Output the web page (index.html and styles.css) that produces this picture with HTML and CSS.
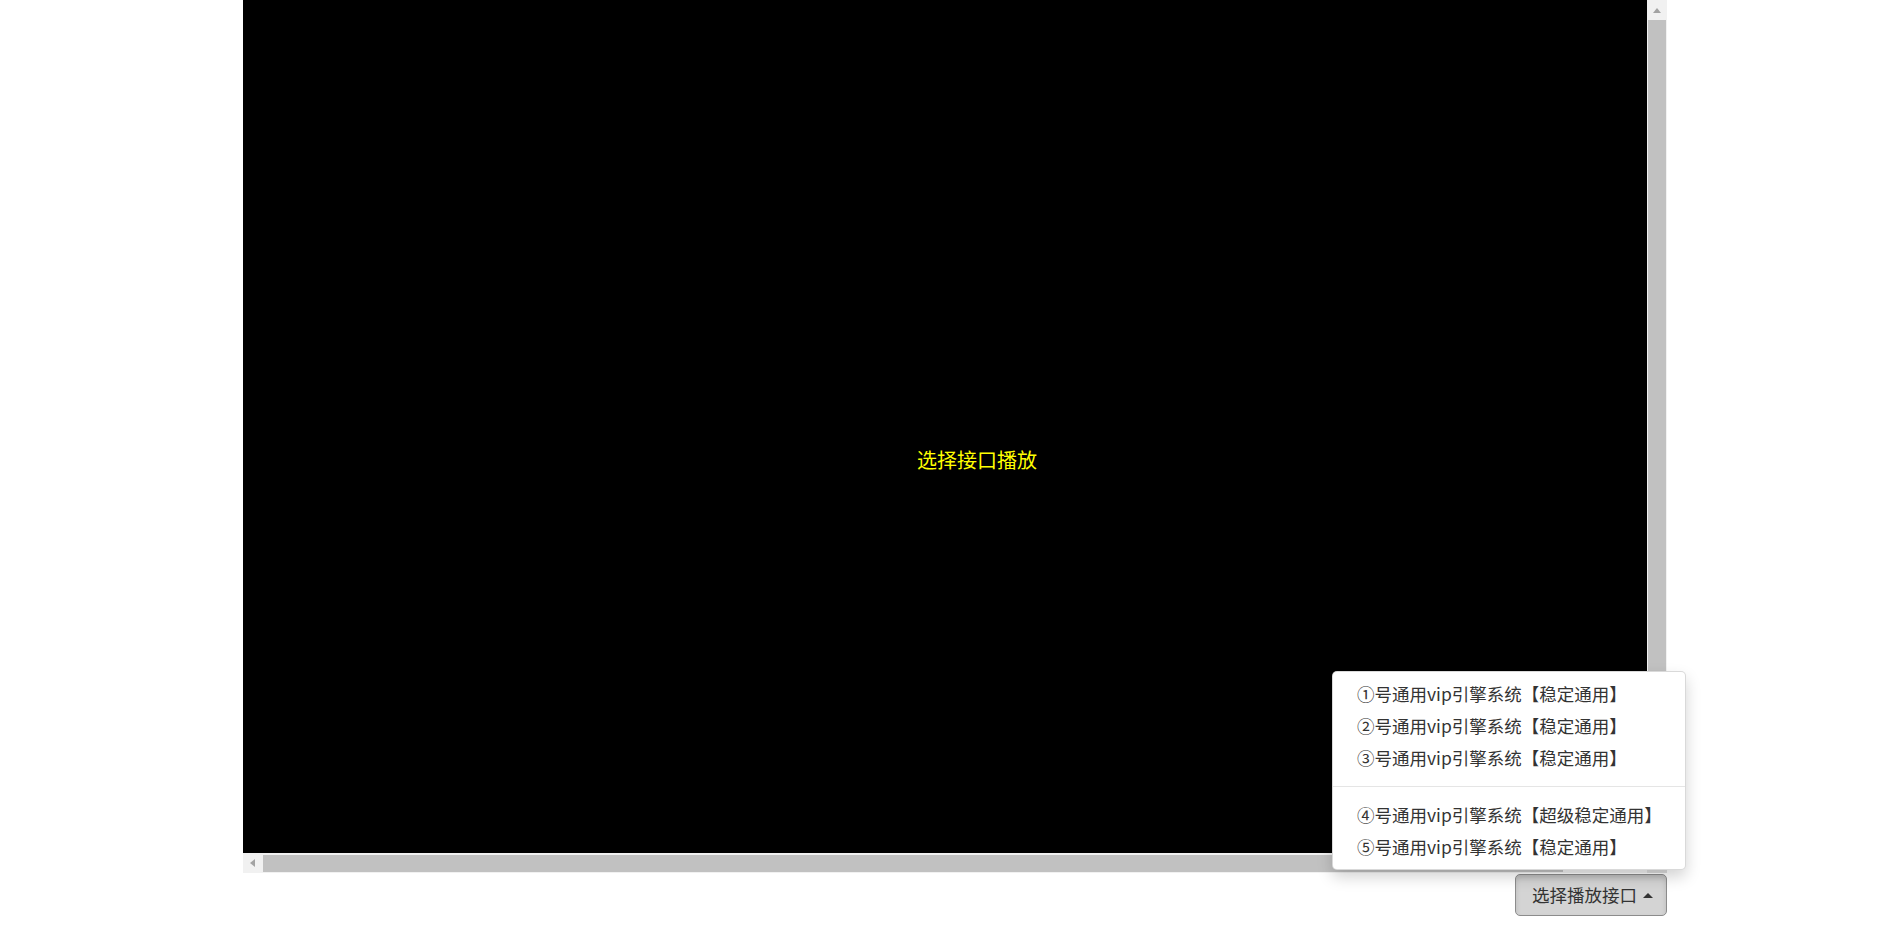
FILE: index.html
```html
<!DOCTYPE html>
<html lang="zh-CN">
<head>
<meta charset="utf-8">
<title>选择播放接口</title>
<link rel="stylesheet" href="styles.css">
</head>
<body>
<div class="page">
  <div class="player">
    <div class="viewport">
      <div class="screen"><span class="hint">选择接口播放</span></div>
    </div>
    <div class="vscroll">
      <div class="sb-btn"><span class="arrow-up"></span></div>
      <div class="vthumb"></div>
    </div>
    <div class="hscroll">
      <div class="sb-btn"><span class="arrow-left"></span></div>
      <div class="hthumb"></div>
    </div>
    <div class="corner"></div>
  </div>
  <div class="controls">
    <div class="btn-group">
      <button class="btn" type="button">选择播放接口<span class="caret"></span></button>
      <ul class="menu">
        <li><a href="#">①号通用vip引擎系统【稳定通用】</a></li>
        <li><a href="#">②号通用vip引擎系统【稳定通用】</a></li>
        <li><a href="#">③号通用vip引擎系统【稳定通用】</a></li>
        <li class="divider"></li>
        <li><a href="#">④号通用vip引擎系统【超级稳定通用】</a></li>
        <li><a href="#">⑤号通用vip引擎系统【稳定通用】</a></li>
      </ul>
    </div>
  </div>
</div>
</body>
</html>
```
FILE: styles.css
```css
* { box-sizing: border-box; }
html, body { margin: 0; padding: 0; background: #fff; }
body {
  font-family: "Noto Sans CJK SC", "Noto Sans", "Liberation Sans", sans-serif;
  color: #333;
}
.page {
  width: 1424px;
  margin-left: 243px;
}
.player {
  display: grid;
  grid-template-columns: 1404px 20px;
  grid-template-rows: 853px 20px;
}
.viewport {
  overflow: hidden;
  background: #000;
}
.screen {
  width: 1468px;
  height: 920px;
  display: flex;
  align-items: center;
  justify-content: center;
  background: #000;
}
.hint {
  color: #ffff00;
  font-size: 20px;
  line-height: 24px;
}
.vscroll {
  background: #f1f1f1;
  display: flex;
  flex-direction: column;
  align-items: center;
}
.vscroll .sb-btn {
  width: 20px;
  height: 20px;
  display: flex;
  align-items: center;
  justify-content: center;
}
.arrow-up {
  width: 0; height: 0;
  border-left: 4px solid transparent;
  border-right: 4px solid transparent;
  border-bottom: 5px solid #a3a3a3;
}
.vthumb {
  width: 18px;
  height: 800px;
  background: #c1c1c1;
}
.hscroll {
  background: #f1f1f1;
  display: flex;
  align-items: center;
}
.hscroll .sb-btn {
  width: 20px;
  height: 20px;
  flex: none;
  display: flex;
  align-items: center;
  justify-content: center;
}
.arrow-left {
  width: 0; height: 0;
  border-top: 4.5px solid transparent;
  border-bottom: 4.5px solid transparent;
  border-right: 5px solid #a3a3a3;
  margin-right: 2px;
}
.hthumb {
  height: 17px;
  width: 1300px;
  background: #c1c1c1;
}
.corner { background: #dcdcdc; }
.controls {
  display: flex;
  justify-content: flex-end;
  margin-top: 1px;
}
.btn-group {
  position: relative;
}
.btn {
  display: flex;
  align-items: center;
  height: 42px;
  padding: 0 13px 0 16px;
  font-family: inherit;
  font-size: 17.5px;
  line-height: 26px;
  color: #333;
  background: #d4d4d4;
  border: 1px solid #8c8c8c;
  border-radius: 5px;
  box-shadow: inset 0 3px 5px rgba(0,0,0,.125);
  cursor: pointer;
}
.caret {
  width: 0; height: 0;
  margin-left: 6px;
  border-left: 5px solid transparent;
  border-right: 5px solid transparent;
  border-bottom: 5px solid #333;
}
.menu {
  position: absolute;
  right: -19px;
  bottom: calc(100% + 4px);
  width: 354px;
  margin: 0;
  padding: 6px 0;
  list-style: none;
  background: #fff;
  border: 1px solid rgba(0,0,0,.15);
  border-radius: 5px;
  box-shadow: 0 7px 15px rgba(0,0,0,.175);
  z-index: 10;
}
.menu a {
  display: block;
  padding: 0 24px;
  font-size: 17.5px;
  line-height: 32px;
  color: #333;
  text-decoration: none;
  white-space: nowrap;
}
.divider {
  height: 1px;
  margin: 12px 0;
  background: #e5e5e5;
}
```
